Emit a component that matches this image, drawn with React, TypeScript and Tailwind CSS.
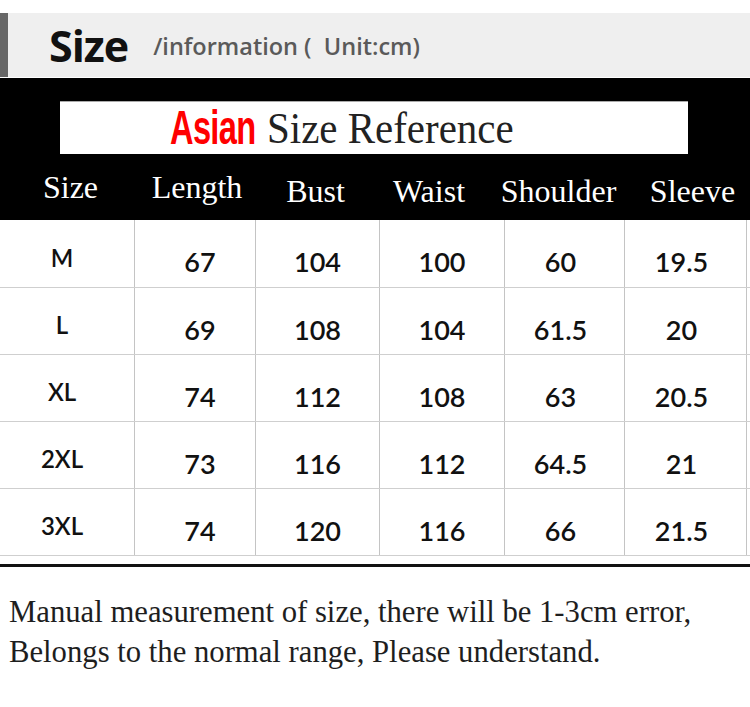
import React from "react";

const rows = [
  ["M", "67", "104", "100", "60", "19.5"],
  ["L", "69", "108", "104", "61.5", "20"],
  ["XL", "74", "112", "108", "63", "20.5"],
  ["2XL", "73", "116", "112", "64.5", "21"],
  ["3XL", "74", "120", "116", "66", "21.5"],
];

const widths = ["w-[135px]", "w-[121px]", "w-[124px]", "w-[125px]", "w-[120px]", "w-[122px]"];
const headPad = ["pl-[6px]", "pl-[3px]", "pr-[5px] pt-[7px]", "pr-[27px] pt-[7px]", "pr-[13px] pt-[7px]", "pl-[13px] pt-[7px]"];
const cellPad = ["pr-[10px] pt-[8px] text-[24px]", "pl-[10px] pt-[16px] text-[27px]", "pt-[16px] text-[27px]", "pt-[16px] text-[27px]", "pr-[8px] pt-[16px] text-[27px]", "pr-[8px] pt-[16px] text-[27px]"];

export default function App() {
  return (
    <div className="w-[750px] h-[707px] bg-white overflow-hidden">
      <div className="h-[13px]" />
      <div className="h-[64px] flex bg-[#efefef]">
        <div className="w-[8px] bg-[#676767]" />
        <div className="flex items-center pl-[41px]">
          <span className="text-[43px] font-bold text-[#111] tracking-[-1px] leading-none" style={{ fontFamily: '"Open Sans", sans-serif' }}>Size</span>
          <span className="ml-[25px] mt-[4px] text-[23.5px] font-semibold text-[#5a5a5a] leading-none" style={{ fontFamily: '"Open Sans", sans-serif' }}>/information (&nbsp; Unit:cm)</span>
        </div>
      </div>
      <div className="h-[1px]" />
      <div className="h-[142px] bg-black pt-[23px]">
        <div className="ml-[60px] w-[628px] h-[53px] bg-white border-t border-[#aaa] flex items-center pl-[110px]">
          <div className="w-[86px] h-[40px] flex items-center">
            <span className="inline-block text-[48px] font-bold text-[#ff0000] leading-none scale-x-[0.68] scale-y-[1.02] origin-left tracking-[-1px]" style={{ fontFamily: '"Liberation Sans Narrow", "Liberation Sans", sans-serif' }}>Asian</span>
          </div>
          <div className="ml-[11px] w-[245px] h-[44px] flex items-center">
            <span className="inline-block whitespace-nowrap text-[45px] text-[#222] leading-none scale-x-[0.91] origin-left" style={{ fontFamily: '"Liberation Serif", serif' }}>Size Reference</span>
          </div>
        </div>
        <div className="flex h-[66px] items-center text-white text-[32px] leading-none" style={{ fontFamily: '"Liberation Serif", serif' }}>
          {["Size", "Length", "Bust", "Waist", "Shoulder", "Sleeve"].map((h, i) => (
            <div key={h} className={`${widths[i]} flex justify-center ${headPad[i]}`}>
              <span>{h}</span>
            </div>
          ))}
        </div>
      </div>
      <div style={{ fontFamily: 'Lato, sans-serif' }}>
        {rows.map((r, ri) => (
          <div key={ri} className={`flex border-b border-[#cfcfcf] ${ri === 0 ? "h-[68px]" : "h-[67px]"}`}>
            {r.map((c, ci) => (
              <div key={ci} className={`${widths[ci]} border-r border-[#c4c4c4] flex items-center justify-center text-[#111] leading-none font-semibold ${cellPad[ci]}`}>
                {c}
              </div>
            ))}
          </div>
        ))}
      </div>
      <div className="h-[8px]" />
      <div className="h-[3px] bg-[#111]" />
      <div className="pt-[25px] pl-[9px] text-[30.7px] leading-[40px] text-[#1e1e1e]" style={{ fontFamily: '"Liberation Serif", serif' }}>
        <div>Manual measurement of size, there will be 1-3cm error,</div>
        <div>Belongs to the normal range, Please understand.</div>
      </div>
    </div>
  );
}
